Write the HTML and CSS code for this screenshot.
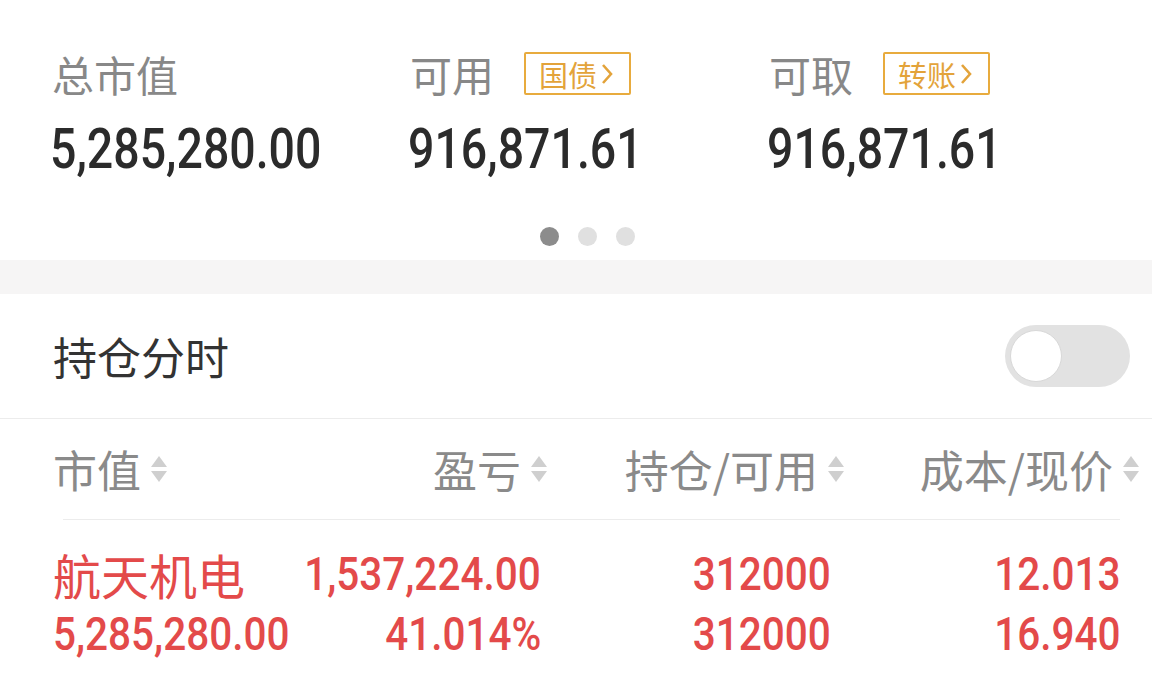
FILE: index.html
```html
<!DOCTYPE html>
<html lang="zh-CN">
<head>
  <meta charset="UTF-8">
  <title>持仓</title>
  <link rel="stylesheet" href="styles.css">
</head>
<body>

  <div class="summary">
    <div class="stat">
      <div class="stat-label">总市值</div>
      <div class="stat-value"><span class="digits">5,285,280.00</span></div>
    </div>
    <div class="stat">
      <div class="stat-label">可用
        <span class="tag">国债<svg class="chev" viewBox="0 0 12 22"><path d="M2 2 L10 11 L2 20" /></svg></span>
      </div>
      <div class="stat-value"><span class="digits">916,871.61</span></div>
    </div>
    <div class="stat">
      <div class="stat-label">可取
        <span class="tag">转账<svg class="chev" viewBox="0 0 12 22"><path d="M2 2 L10 11 L2 20" /></svg></span>
      </div>
      <div class="stat-value"><span class="digits">916,871.61</span></div>
    </div>
  </div>

  <div class="dots">
    <span class="dot on"></span>
    <span class="dot"></span>
    <span class="dot"></span>
  </div>

  <div class="band"></div>

  <div class="switch-row">
    <span>持仓分时</span>
    <div class="toggle"><div class="knob"></div></div>
  </div>

  <div class="thead">
    <div class="th left">市值<svg class="sort" viewBox="0 0 18 30"><path d="M9 2 L17 13 L1 13 Z" /><path d="M1 17 L17 17 L9 28 Z" /></svg></div>
    <div class="th">盈亏<svg class="sort" viewBox="0 0 18 30"><path d="M9 2 L17 13 L1 13 Z" /><path d="M1 17 L17 17 L9 28 Z" /></svg></div>
    <div class="th">持仓/可用<svg class="sort" viewBox="0 0 18 30"><path d="M9 2 L17 13 L1 13 Z" /><path d="M1 17 L17 17 L9 28 Z" /></svg></div>
    <div class="th">成本/现价<svg class="sort" viewBox="0 0 18 30"><path d="M9 2 L17 13 L1 13 Z" /><path d="M1 17 L17 17 L9 28 Z" /></svg></div>
  </div>
  <div class="divider"></div>

  <div class="row">
    <div class="cell name">航天机电</div>
    <div class="cell"><span class="num">1,537,224.00</span></div>
    <div class="cell"><span class="num">312000</span></div>
    <div class="cell"><span class="num">12.013</span></div>
    <div class="cell left"><span class="num">5,285,280.00</span></div>
    <div class="cell"><span class="num">41.014%</span></div>
    <div class="cell"><span class="num">312000</span></div>
    <div class="cell"><span class="num">16.940</span></div>
  </div>

</body>
</html>
```

FILE: styles.css
```css
body {
  margin: 0;
  background-color: #fff;
  color: #333;
  font-family: "Noto Sans CJK SC", "Noto Sans", sans-serif;
  overflow: hidden;
}
.summary {
  display: grid;
  grid-template-columns: 358px 359px 359px;
  padding: 52px 0 0 50px;
}
.stat-label {
  display: flex;
  align-items: center;
  height: 43px;
  padding-left: 2px;
  font-size: 42px;
  color: #888;
}
.tag {
  display: inline-flex;
  align-items: center;
  box-sizing: border-box;
  height: 43px;
  width: 107px;
  margin-left: 30px;
  padding-left: 13px;
  border: 2px solid #e8ab3e;
  border-radius: 2px;
  color: #e3a33a;
  font-size: 29px;
}
.chev {
  width: 12px;
  height: 22px;
  margin-left: 4px;
  fill: none;
  stroke: #e3a33a;
  stroke-width: 2.6;
}
.stat-value {
  margin-top: 26px;
  height: 56px;
  color: #2b2b2b;
}
/* condensed digits, close to the DIN face in the app */
.digits,
.num {
  display: block;
  width: max-content;
  font-family: Roboto, "Liberation Sans", sans-serif;
  font-weight: 500;
  white-space: nowrap;
}
.digits {
  font-size: 56px;
  line-height: 56px;
  transform: scaleX(0.83);
  transform-origin: left center;
}
.dots {
  display: flex;
  justify-content: center;
  gap: 19px;
  margin-top: 50px;
  padding-left: 22px;
}
.dot {
  width: 19px;
  height: 19px;
  border-radius: 50%;
  background: #e0e0e0;
}
.dot.on {
  background: #8c8c8c;
}
.band {
  height: 34px;
  margin-top: 14px;
  background: #f6f5f5;
}
.switch-row {
  display: flex;
  align-items: center;
  justify-content: space-between;
  height: 124px;
  padding: 0 22px 0 53px;
  border-bottom: 1px solid #ececec;
  font-size: 44px;
  color: #333;
}
.toggle {
  position: relative;
  width: 125px;
  height: 62px;
  border-radius: 31px;
  background: #e2e2e2;
}
.knob {
  position: absolute;
  left: 5px;
  top: 5px;
  width: 50px;
  height: 50px;
  border-radius: 50%;
  background: #fff;
  border: 1px solid #d8d8d8;
}
.thead {
  display: grid;
  grid-template-columns: 250px 245px 297px 295px;
  align-items: center;
  height: 100px;
  padding-left: 53px;
  font-size: 44px;
  color: #8a8a8a;
}
.th {
  display: flex;
  align-items: center;
  justify-content: flex-end;
}
.th.left {
  justify-content: flex-start;
}
.sort {
  width: 18px;
  height: 30px;
  margin-left: 9px;
  fill: #cfcfcf;
}
.divider {
  height: 1px;
  margin: 0 32px 0 63px;
  background: #ececec;
}
.row {
  display: grid;
  grid-template-columns: 250px 238px 290px 290px;
  grid-auto-rows: 60px;
  align-items: center;
  padding: 24px 0 0 53px;
  color: #e34a4a;
}
.cell {
  display: flex;
  justify-content: flex-end;
  white-space: nowrap;
}
.cell.name {
  justify-content: flex-start;
  font-size: 48px;
}
.num {
  font-size: 46px;
  line-height: 60px;
  transform: scaleX(0.88);
  transform-origin: right center;
}
.cell.left {
  justify-content: flex-start;
}
.cell.left .num {
  transform-origin: left center;
}
```
